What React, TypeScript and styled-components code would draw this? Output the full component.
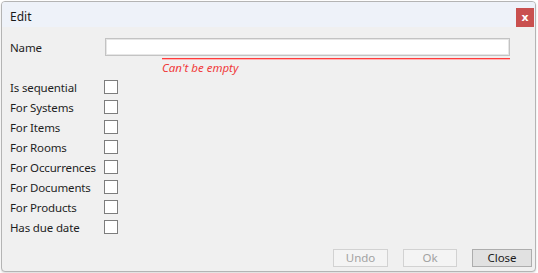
import React from "react";
import styled, { createGlobalStyle } from "styled-components";

const Global = createGlobalStyle`
  html, body { margin: 0; padding: 0; background: #ffffff; }
  body { font-family: "Noto Sans", "Open Sans", sans-serif; }
  * { box-sizing: border-box; }
`;

const Desktop = styled.div`
  position: relative;
  width: 538px;
  height: 273px;
  overflow: hidden;
  background: #ffffff;
`;

const Dialog = styled.div`
  position: absolute;
  left: 1px;
  top: 1px;
  width: 535px;
  height: 271px;
  display: flex;
  flex-direction: column;
  background: #f0f0f0;
  border: 1px solid #b4b4b4;
  border-radius: 4px;
  overflow: hidden;
  box-shadow: 0 1px 2px rgba(0, 0, 0, 0.15);
`;

const TitleBar = styled.div`
  height: 25px;
  flex: none;
  display: flex;
  justify-content: space-between;
  background: #eef2f9;
  padding-left: 8px;
  padding-right: 1px;
`;

const Title = styled.span`
  align-self: center;
  margin-top: 4px;
  font-size: 12px;
  color: #1a1a1a;
`;

const CloseX = styled.div`
  align-self: flex-end;
  width: 18px;
  height: 19px;
  background: #c9504f;
  color: #ffffff;
  font-size: 11px;
  font-weight: 700;
  display: flex;
  align-items: center;
  justify-content: center;
  font-family: "DejaVu Sans", sans-serif;
  line-height: 1;
`;

const Body = styled.div`
  flex: 1;
  display: flex;
  flex-direction: column;
  padding: 11px 3px 4px 8px;
`;

const NameRow = styled.div`
  display: flex;
  align-items: center;
  height: 18px;
`;

const Label = styled.span`
  width: 95px;
  flex: none;
  font-size: 11.5px;
  letter-spacing: -0.15px;
  color: #1e1e1e;
  white-space: nowrap;
`;

const TextInput = styled.input`
  width: 405px;
  height: 18px;
  border: 1px solid #c3c3c3;
  box-shadow: inset 0 0 0 1px #e6e6e6;
  background: #ffffff;
  outline: none;
  padding: 0 3px;
  font: inherit;
  font-size: 12px;
`;

const ErrorBlock = styled.div`
  margin-left: 152px;
  width: 348px;
  margin-top: 2px;
`;

const ErrorLine = styled.div`
  height: 2px;
  border-top: 1px solid #ff3c3c;
  border-bottom: 1px solid #ffb4b4;
`;

const ErrorText = styled.div`
  font-size: 11.5px;
  font-style: italic;
  color: #f03a3a;
  line-height: 14px;
  margin-top: 1px;
`;

const Checks = styled.div`
  margin-top: 2px;
  display: flex;
  flex-direction: column;
`;

const CheckRow = styled.div`
  display: flex;
  align-items: center;
  height: 20px;
`;

const Box = styled.span`
  width: 14px;
  height: 14px;
  margin-left: -1px;
  border: 1px solid #7d7d7d;
  background: #ffffff;
`;

const Footer = styled.div`
  margin-top: auto;
  display: flex;
  justify-content: flex-end;
  gap: 15px;
`;

const Button = styled.button<{ $w: number; $disabled?: boolean }>`
  width: ${(p) => p.$w}px;
  height: 18px;
  padding: 0;
  font: inherit;
  font-size: 11.5px;
  line-height: 16px;
  background: ${(p) => (p.$disabled ? "#f4f4f4" : "#e1e1e1")};
  border: 1px solid ${(p) => (p.$disabled ? "#d2d2d2" : "#adadad")};
  color: ${(p) => (p.$disabled ? "#a2a2a2" : "#1a1a1a")};
`;

const fields = [
  "Is sequential",
  "For Systems",
  "For Items",
  "For Rooms",
  "For Occurrences",
  "For Documents",
  "For Products",
  "Has due date",
];

export default function App() {
  return (
    <>
      <Global />
      <Desktop>
        <Dialog>
          <TitleBar>
            <Title>Edit</Title>
            <CloseX>x</CloseX>
          </TitleBar>
          <Body>
            <NameRow>
              <Label>Name</Label>
              <TextInput />
            </NameRow>
            <ErrorBlock>
              <ErrorLine />
              <ErrorText>Can't be empty</ErrorText>
            </ErrorBlock>
            <Checks>
              {fields.map((f) => (
                <CheckRow key={f}>
                  <Label>{f}</Label>
                  <Box />
                </CheckRow>
              ))}
            </Checks>
            <Footer>
              <Button $w={55} $disabled>
                Undo
              </Button>
              <Button $w={54} $disabled>
                Ok
              </Button>
              <Button $w={60}>Close</Button>
            </Footer>
          </Body>
        </Dialog>
      </Desktop>
    </>
  );
}
